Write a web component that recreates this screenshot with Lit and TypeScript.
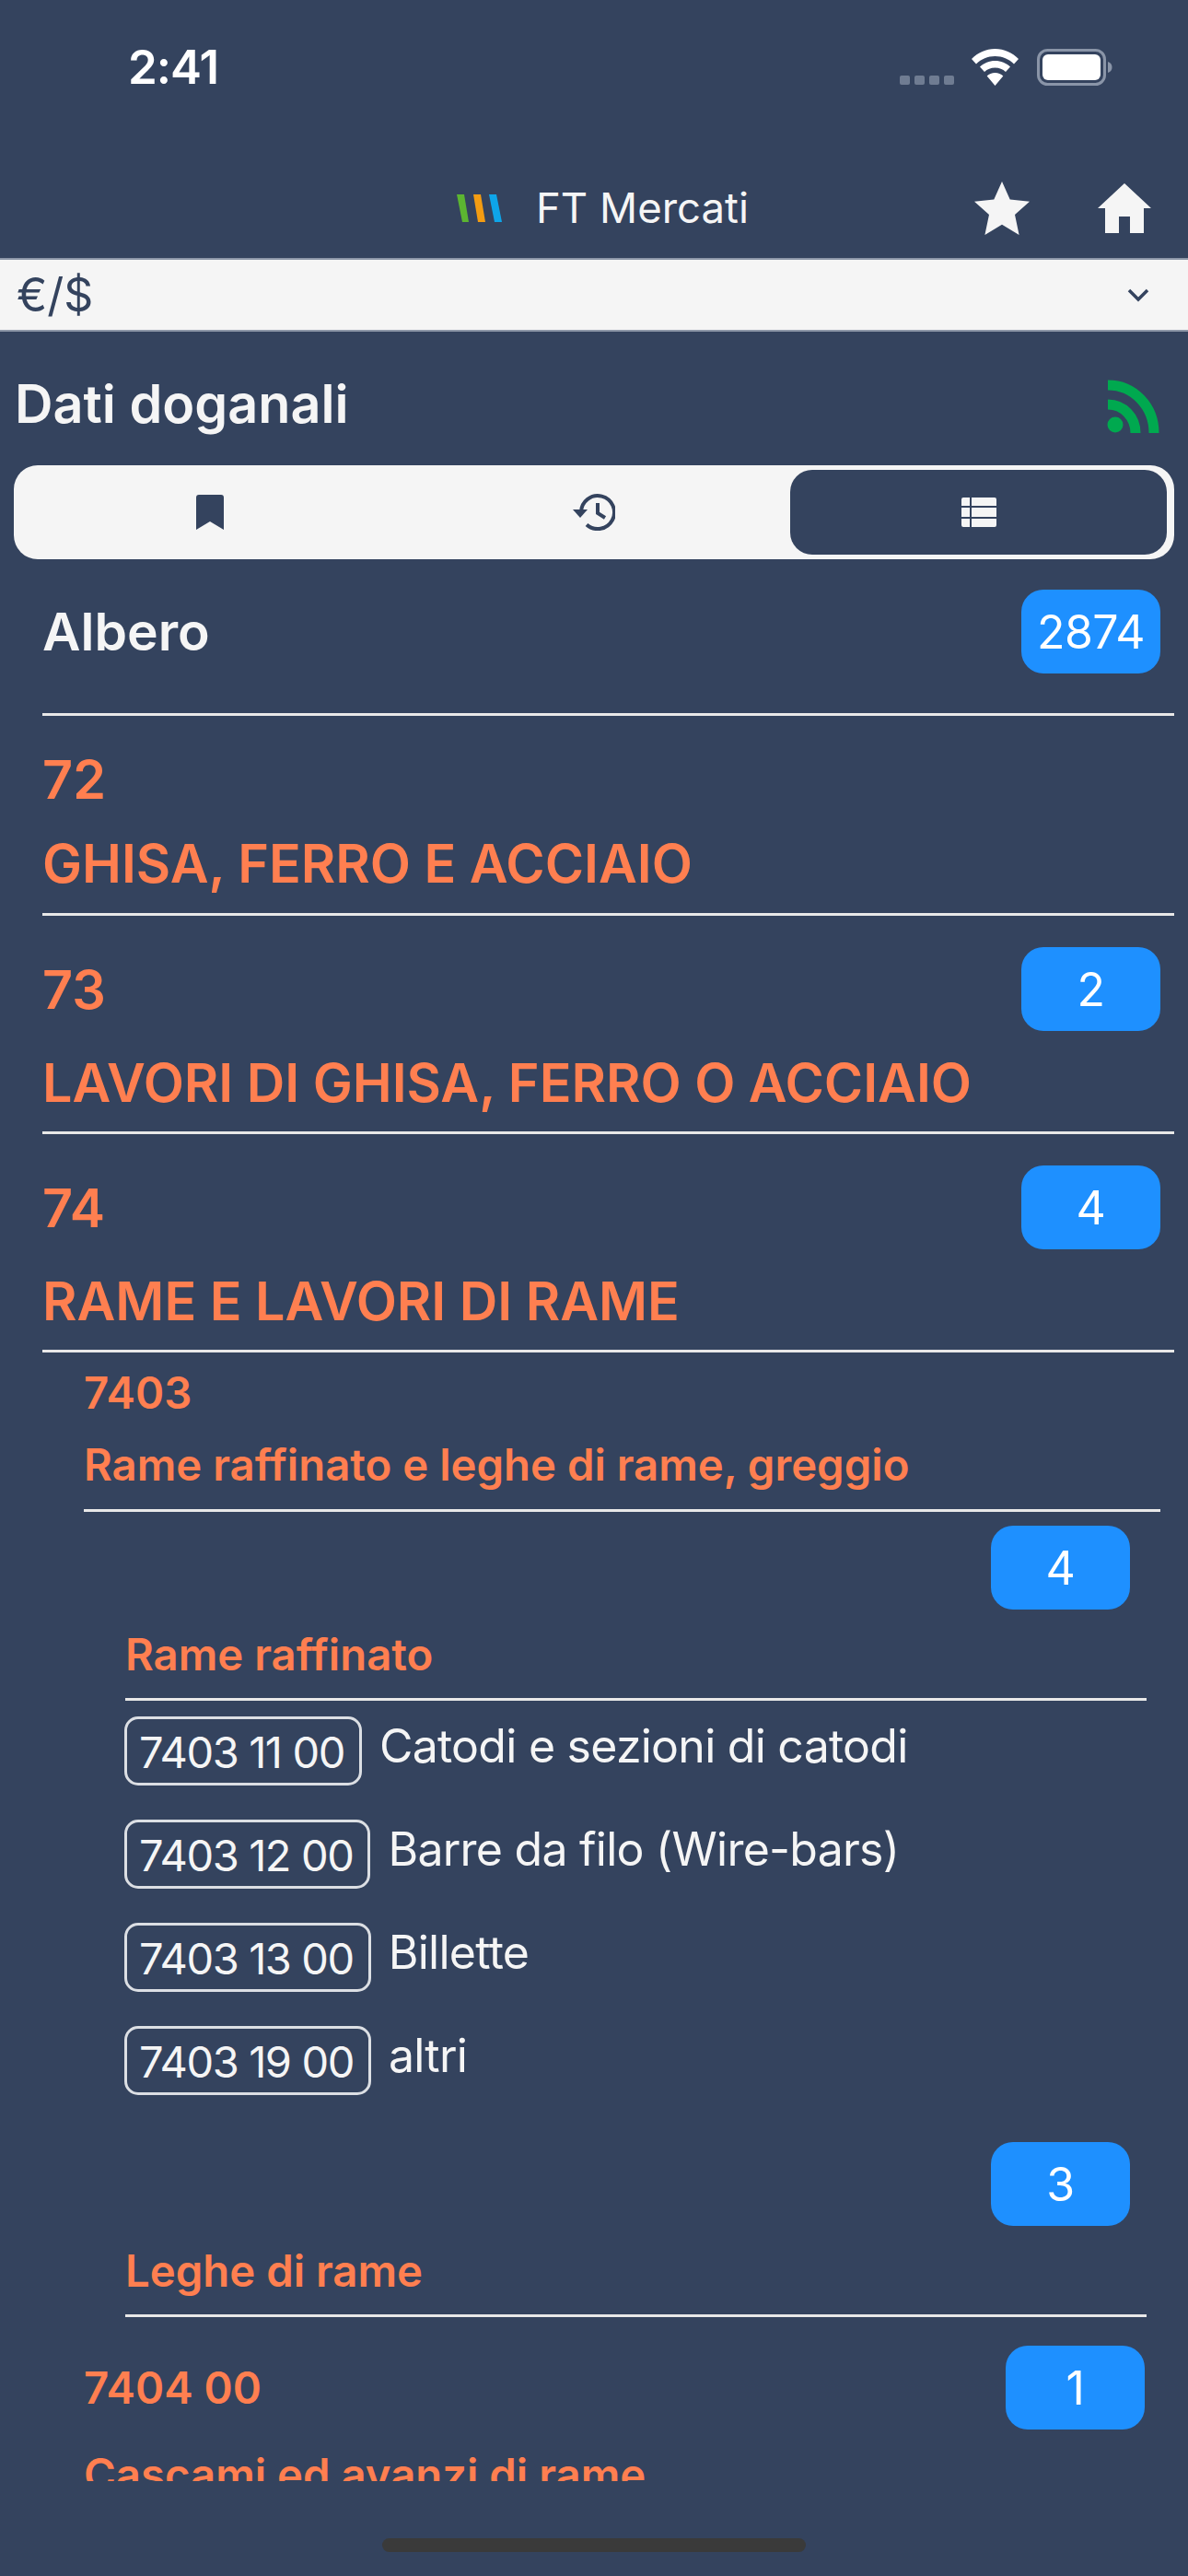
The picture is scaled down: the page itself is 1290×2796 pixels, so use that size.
import { LitElement, html, css } from "lit";
import { customElement } from "lit/decorators.js";

const codes = [
  ["7403 11 00", "Catodi e sezioni di catodi"],
  ["7403 12 00", "Barre da filo (Wire-bars)"],
  ["7403 13 00", "Billette"],
  ["7403 19 00", "altri"],
];

@customElement("app-root")
export class AppRoot extends LitElement {
  static styles = css`
    :host { display: block; width: 1290px; height: 2796px; background: #34435e; color: #f5f5f5; font-family: Inter, "Liberation Sans", sans-serif; overflow: hidden; }
    .status { height: 132px; box-sizing: border-box; display: flex; align-items: flex-start; padding: 0 82px 0 139px; }
    .time { font-size: 51px; font-weight: 600; line-height: 60px; margin-top: 43px; color: #fff; letter-spacing: -1px; }
    .sys { margin-left: auto; margin-top: 53px; display: flex; align-items: flex-start; }
    .dots { display: flex; gap: 5px; margin-top: 29px; margin-right: 19px; }
    .dots i { width: 11px; height: 10px; border-radius: 2px; background: #6f7c92; }
    .wifi { width: 51px; height: 40px; margin-right: 20px; }
    .batt { width: 82px; height: 40px; }
    .nav { height: 148px; box-sizing: border-box; display: flex; align-items: center; padding: 42px 40px 2px 494px; }
    .logo { width: 52px; height: 30px; margin-right: 36px; }
    .brand { font-size: 45.500px; line-height: 56px; }
    .star { width: 60px; height: 58px; margin-left: auto; }
    .home { width: 58px; height: 54px; margin-left: 74px; }
    .select { height: 80px; box-sizing: border-box; background: #f5f5f5; border-top: 2px solid #8d97a8; border-bottom: 2px solid #8d97a8; color: #34435e; display: flex; align-items: center; padding: 0 41px 0 18px; font-size: 50px; }
    .chev { width: 26px; height: 16px; margin-left: auto; }
    .content { height: 2333px; overflow: hidden; }
    .head { height: 145px; box-sizing: border-box; display: flex; align-items: flex-start; padding: 46px 30px 0 16px; }
    .head h1 { margin: 0; font-size: 57.500px; font-weight: 600; line-height: 64px; }
    .rss { width: 58px; height: 58px; margin-left: auto; margin-top: 6px; }
    .seg { height: 102px; box-sizing: border-box; margin: 0 15px; background: #f5f5f5; border-radius: 26px; display: grid; grid-template-columns: 1fr 1fr 1fr; padding: 5px; color: #34435e; }
    .seg div { display: flex; align-items: center; justify-content: center; }
    .seg .on { background: #34435e; border-radius: 24px; color: #f5f5f5; margin-left: 5px; margin-right: 3px; }
    .seg .s1 { width: 30px; height: 38px; }
    .seg .s2 { width: 46px; height: 40px; }
    .seg .s3 { width: 38px; height: 32px; }
    .row { border-bottom: 3px solid #e8e8e8; }
    .top { display: flex; align-items: center; }
    .badge { margin-left: auto; width: 151px; height: 91px; border-radius: 24px; background: #1e90ff; color: #fff; display: flex; align-items: center; justify-content: center; font-size: 50px; font-weight: 400; letter-spacing: -0.5px; }
    .root { margin: 33px 15px 0 46px; padding-bottom: 43px; }
    .root .name { font-size: 57px; font-weight: 600; }
    .root .top { padding-right: 15px; }
    .coral { color: #ff7f50; font-weight: 600; }
    .l1 { margin-left: 46px; margin-right: 15px; padding: 35px 15px 20px 0; font-size: 57.500px; line-height: 68px; }
    .l1 .t { margin-top: 23px; }
    .l1.b { padding-top: 34px; padding-bottom: 19px; }
    .l1.b .t { margin-top: 22px; }
    .l2 { margin-left: 91px; margin-right: 30px; padding: 15px 17px 19px 0; font-size: 47.300px; line-height: 58px; }
    .l2 .t { margin-top: 20px; }
    .l3 { margin-left: 136px; margin-right: 45px; padding: 15px 18px 18px 0; font-size: 47.300px; line-height: 58px; }
    .l3 .t { margin-top: 20px; }
    .codes { margin-left: 135px; padding-top: 17px; height: 464px; box-sizing: border-box; display: flex; flex-direction: column; gap: 37px; }
    .code { display: flex; align-items: flex-start; font-size: 50px; line-height: 64px; letter-spacing: -0.750px; }
    .chip { height: 75px; box-sizing: border-box; border: 3px solid #dcdfe4; border-radius: 15px; padding: 0 16px 0 13px; font-size: 47px; line-height: 71px; margin-right: 19px; letter-spacing: -1.400px; }
    .l2b { margin-left: 91px; margin-right: 30px; padding: 31px 17px 0 0; font-size: 47.300px; line-height: 58px; }
    .l2b .t { margin-top: 20px; }
    .bar { width: 460px; height: 15px; border-radius: 8px; background: #3a3a3a; margin: 62px 0 0 415px; }
  `;

  private badge(n: string) { return html`<span class="badge">${n}</span>`; }

  render() {
    return html`
      <div class="status">
        <span class="time">2:41</span>
        <div class="sys">
          <div class="dots"><i></i><i></i><i></i><i></i></div>
          <svg class="wifi" viewBox="0 0 51 40"><path fill="#fff" d="M25.500 0C15.500 0 7 4 0 11l5 5.500C10.500 11 17.500 8 25.500 8S40.500 11 46 16.500l5-5.500C44 4 35.500 0 25.500 0zM25.500 13c-6.500 0-12 2.500-16.500 6.500l5 5.500c3-3 7-4.500 11.500-4.500S34 22 37 25l5-5.500C37.500 15.500 32 13 25.500 13zM25.500 26c-3.500 0-6.500 1.300-8.800 3.500L25.500 40l8.800-10.500C32 27.300 29 26 25.500 26z"/></svg>
          <svg class="batt" viewBox="0 0 82 40"><rect x="1.500" y="1.500" width="72" height="37" rx="10" fill="none" stroke="#8a95a8" stroke-width="3"/><rect x="6" y="6" width="63" height="28" rx="6" fill="#fff"/><path d="M77 14c3 1 4.500 3 4.500 6s-1.500 5-4.500 6z" fill="#8a95a8"/></svg>
        </div>
      </div>
      <div class="nav">
        <svg class="logo" viewBox="0 0 52 30"><path d="M2 0h8l5 30H8z" fill="#5cb531"/><path d="M20 0h8l5 30h-8z" fill="#f39c12"/><path d="M37 0h8l6 30h-8z" fill="#0ea5e9"/></svg>
        <span class="brand">FT Mercati</span>
        <svg class="star" viewBox="0 0 60 58"><path fill="#f5f5f5" d="M30 0l8.700 19.500L60 21.700 44 36l4.600 22L30 46.800 11.400 58 16 36 0 21.700l21.300-2.200z"/></svg>
        <svg class="home" viewBox="0 0 58 54"><path fill="#f5f5f5" d="M29 0L0 27h8v27h15V36h12v18h15V27h8z"/></svg>
      </div>
      <div class="select">
        <span>€/$</span>
        <svg class="chev" viewBox="0 0 26 16"><path d="M3 3l10 10L23 3" fill="none" stroke="#34435e" stroke-width="3.500"/></svg>
      </div>
      <div class="content">
        <div class="head">
          <h1>Dati doganali</h1>
          <svg class="rss" viewBox="0 0 58 58"><g fill="none" stroke="#00a94f" stroke-width="11"><path d="M1 6c28 0 50 23 50 52"/><path d="M1 27c17 0 30 14 30 31"/></g><circle cx="9" cy="49" r="8.500" fill="#00a94f"/></svg>
        </div>
        <div class="seg">
          <div><svg class="s1" viewBox="0 0 30 38"><path fill="currentColor" d="M0 3a3 3 0 0 1 3-3h24a3 3 0 0 1 3 3v35L15 29 0 38z"/></svg></div>
          <div><svg class="s2" viewBox="0 0 46 40"><g fill="none" stroke="currentColor" stroke-width="4"><path d="M9 20a18 18 0 1 1 6 13.500"/><path d="M27 10v11l8 5"/></g><path fill="currentColor" d="M0 17h16l-8 9z"/></svg></div>
          <div class="on"><svg class="s3" viewBox="0 0 38 32"><path fill="currentColor" d="M0 2a2 2 0 0 1 2-2h7v9H0zM11 0h25a2 2 0 0 1 2 2v7H11zM0 11h9v10H0zM11 11h27v10H11zM0 23h9v9H2a2 2 0 0 1-2-2zM11 23h27v7a2 2 0 0 1-2 2H11z"/></svg></div>
        </div>
        <div class="row root"><div class="top"><span class="name">Albero</span>${this.badge("2874")}</div></div>
        <div class="row l1 coral"><div>72</div><div class="t">GHISA, FERRO E ACCIAIO</div></div>
        <div class="row l1 b coral"><div class="top"><span>73</span>${this.badge("2")}</div><div class="t">LAVORI DI GHISA, FERRO O ACCIAIO</div></div>
        <div class="row l1 b coral"><div class="top"><span>74</span>${this.badge("4")}</div><div class="t">RAME E LAVORI DI RAME</div></div>
        <div class="row l2 coral"><div>7403</div><div class="t">Rame raffinato e leghe di rame, greggio</div></div>
        <div class="row l3 coral"><div class="top">${this.badge("4")}</div><div class="t">Rame raffinato</div></div>
        <div class="codes">
          ${codes.map(([c, t]) => html`<div class="code"><span class="chip">${c}</span><span>${t}</span></div>`)}
        </div>
        <div class="row l3 coral"><div class="top">${this.badge("3")}</div><div class="t">Leghe di rame</div></div>
        <div class="l2b coral"><div class="top"><span>7404 00</span>${this.badge("1")}</div><div class="t">Cascami ed avanzi di rame</div></div>
      </div>
      <div class="bar"></div>
    `;
  }
}
